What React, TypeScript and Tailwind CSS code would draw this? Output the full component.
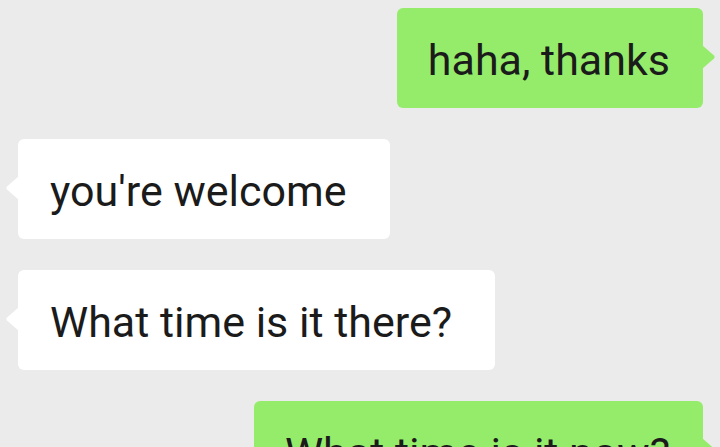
import React from "react";

function Bubble({ text, mine }: { text: string; mine?: boolean }) {
  return (
    <div className={mine ? "flex justify-end pr-[17px]" : "flex justify-start pl-[18px]"}>
      <div
        className={
          "relative h-[100px] rounded-[6px] flex items-center pt-[4px] text-[43px] text-[#1b1b1b] " +
          (mine ? "bg-[#95ec6a] pl-[31px] pr-[33px]" : "bg-white pl-[32px] pr-[43px]")
        }
        style={{ fontFamily: "Roboto, 'Noto Sans', sans-serif" }}
      >
        <span className="leading-none whitespace-nowrap">{text}</span>
        {mine ? (
          <svg className="absolute top-[37px] right-[-13px]" width="14" height="24" viewBox="0 0 14 24">
            <path d="M0 0 L12 10.5 Q13.5 12 12 13.5 L0 24 Z" fill="#95ec6a" />
          </svg>
        ) : (
          <svg className="absolute top-[37px] left-[-13px]" width="14" height="24" viewBox="0 0 14 24">
            <path d="M14 0 L2 10.5 Q0.5 12 2 13.5 L14 24 Z" fill="#ffffff" />
          </svg>
        )}
      </div>
    </div>
  );
}

export default function App() {
  return (
    <div className="w-[720px] h-[447px] overflow-hidden bg-[#ebebeb] flex flex-col gap-[31px] pt-[8px]">
      <Bubble text="haha, thanks" mine />
      <Bubble text="you're welcome" />
      <Bubble text="What time is it there?" />
      <Bubble text="What time is it now?" mine />
    </div>
  );
}
